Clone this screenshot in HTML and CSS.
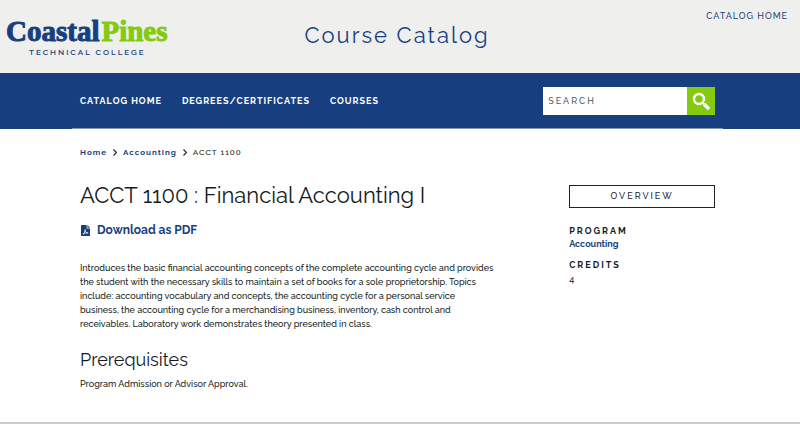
FILE: index.html
```html
<!DOCTYPE html>
<html lang="en">
<head>
    <meta charset="UTF-8">
    <meta name="viewport" content="width=device-width, initial-scale=1.0">
    <title>ACCT 1100 : Financial Accounting I</title>
    <link rel="stylesheet" href="styles.css">
</head>
<body>
    <header class="site-header">
        <a class="logo" href="#">
            <span class="logo-name">Coastal<span class="logo-green">Pines</span></span>
            <span class="logo-sub">TECHNICAL COLLEGE</span>
        </a>
        <div class="site-title">Course Catalog</div>
        <a class="top-link" href="#">CATALOG HOME</a>
    </header>

    <div class="navbar">
        <div class="container nav-inner">
            <nav class="nav-links">
                <a href="#">CATALOG HOME</a>
                <a href="#">DEGREES/CERTIFICATES</a>
                <a href="#">COURSES</a>
            </nav>
            <form class="search">
                <input type="text" placeholder="SEARCH" aria-label="Search">
                <button type="button" aria-label="Submit search">
                    <svg width="18" height="18" viewBox="0 0 18 18">
                        <circle cx="7" cy="7" r="5" fill="none" stroke="#fff" stroke-width="2.4"/>
                        <path d="M10.500 10.500l2 2" stroke="#fff" stroke-width="1.600"/>
                        <path d="M12 12l5 5" stroke="#fff" stroke-width="3.600"/>
                    </svg>
                </button>
            </form>
        </div>
    </div>

    <div class="container">
        <nav class="breadcrumb" aria-label="Breadcrumb">
            <a href="#">Home</a>
            <svg width="4" height="7" viewBox="0 0 4 7"><path d="M.5.5l3 3-3 3" fill="none" stroke="#1d252c" stroke-width="1.2"/></svg>
            <a href="#">Accounting</a>
            <svg width="4" height="7" viewBox="0 0 4 7"><path d="M.5.5l3 3-3 3" fill="none" stroke="#1d252c" stroke-width="1.2"/></svg>
            <span>ACCT 1100</span>
        </nav>

        <div class="columns">
            <main>
                <h1>ACCT 1100 : Financial Accounting I</h1>
                <a class="download" href="#">
                    <svg width="9" height="11" viewBox="0 0 384 512" preserveAspectRatio="none">
                        <path fill="#173f7f" d="M24 0h216v136q0 24 24 24h120v328q0 24-24 24H24q-24 0-24-24V24Q0 0 24 0zM272 0l112 128H272z"/>
                        <path fill="none" stroke="#fff" stroke-width="34" stroke-linejoin="round" d="M80 430c75-55 115-145 95-215-25 75 35 155 130 160-75-20-145 0-225 55z"/>
                    </svg>
                    Download as PDF
                </a>
                <p class="description">Introduces the basic financial accounting concepts of the complete accounting cycle and provides the student with the necessary skills to maintain a set of books for a sole proprietorship. Topics include: accounting vocabulary and concepts, the accounting cycle for a personal service business, the accounting cycle for a merchandising business, inventory, cash control and receivables. Laboratory work demonstrates theory presented in class.</p>
                <h2>Prerequisites</h2>
                <p>Program Admission or Advisor Approval.</p>
            </main>

            <aside>
                <a class="overview" href="#">OVERVIEW</a>
                <h3>PROGRAM</h3>
                <a class="program" href="#">Accounting</a>
                <h3>CREDITS</h3>
                <div class="credits">4</div>
            </aside>
        </div>
    </div>

    <footer></footer>
</body>
</html>
```
FILE: styles.css
```css
* {
    box-sizing: border-box;
}
body {
    margin: 0;
    font-family: Raleway, Lato, sans-serif;
    font-size: 9px;
    font-weight: 500;
    line-height: 14px;
    color: #141c22;
    background-color: #fff;
}
a {
    color: #173f7f;
    text-decoration: none;
}
svg {
    display: block;
}
.container {
    width: 81.4%;
    margin-left: 9%;
    padding: 0 8px;
}

/* Header */
.site-header {
    display: grid;
    grid-template-columns: 1fr auto 1fr;
    padding: 0 12px 0 6px;
    height: 73px;
    background-color: #efefed;
}
.logo {
    padding-top: 14px;
}
.logo-name {
    display: block;
    font-family: "Liberation Serif", serif;
    font-size: 29px;
    font-weight: bold;
    line-height: 34px;
    white-space: nowrap;
    -webkit-text-stroke: 1px currentColor;
}
.logo-green {
    margin-left: 2px;
    color: #84cb10;
}
.logo-sub {
    display: block;
    padding-left: 23px;
    font-size: 8px;
    font-weight: 600;
    line-height: 8px;
    letter-spacing: 2px;
    white-space: nowrap;
}
.site-title {
    padding-top: 20px;
    font-size: 22px;
    font-weight: normal;
    line-height: 30px;
    letter-spacing: 2px;
    color: #173f7f;
}
.top-link {
    justify-self: end;
    padding-top: 9px;
    letter-spacing: 1px;
}

/* Navigation */
.navbar {
    background-color: #173f7f;
}
.nav-inner {
    display: flex;
    align-items: center;
    justify-content: space-between;
    height: 56px;
    border-bottom: 1px solid #8296b5;
}
.nav-links {
    display: flex;
    gap: 20px;
}
.nav-links a {
    color: #fff;
    font-weight: bold;
    letter-spacing: 1px;
}
.search {
    display: flex;
    width: 172px;
    height: 28px;
}
.search input {
    flex: 1;
    min-width: 0;
    padding: 0 5px;
    border: 0;
    border-radius: 0;
    font-family: inherit;
    font-size: 9px;
    font-weight: 500;
    letter-spacing: 2px;
}
.search input::placeholder {
    color: #555b61;
}
.search button {
    display: flex;
    align-items: center;
    justify-content: center;
    width: 28px;
    padding: 0;
    border: 0;
    background-color: #84cb10;
}

/* Content */
.breadcrumb {
    display: flex;
    align-items: center;
    gap: 6px;
    padding-top: 16px;
    font-size: 8px;
    letter-spacing: 1px;
}
.breadcrumb a {
    font-weight: bold;
}
.columns {
    display: grid;
    grid-template-columns: 1fr 146px;
    gap: 74px;
    padding-top: 20px;
}
h1, h2 {
    margin: 0;
    font-weight: normal;
}
h1 {
    font-size: 22px;
    line-height: 32px;
}
h2 {
    margin-top: 17px;
    font-size: 18px;
    line-height: 24px;
}
p {
    margin: 5px 0 0;
}
.download {
    display: flex;
    align-items: center;
    gap: 7px;
    margin-top: 12px;
    padding-left: 1px;
    font-size: 12px;
    font-weight: bold;
}
.description {
    margin-top: 24px;
}
aside {
    padding-top: 6px;
}
.overview {
    display: block;
    padding: 3px;
    border: 1px solid #1d252c;
    color: #1d252c;
    line-height: 15px;
    letter-spacing: 2px;
    text-align: center;
}
h3 {
    margin: 17px 0 0;
    font-size: 9px;
    line-height: 13px;
    letter-spacing: 2px;
}
.program {
    display: block;
    font-weight: bold;
    line-height: 12px;
}
.program + h3 {
    margin-top: 9px;
}
footer {
    margin-top: 31px;
    border-top: 2px solid #ccc;
}
```
